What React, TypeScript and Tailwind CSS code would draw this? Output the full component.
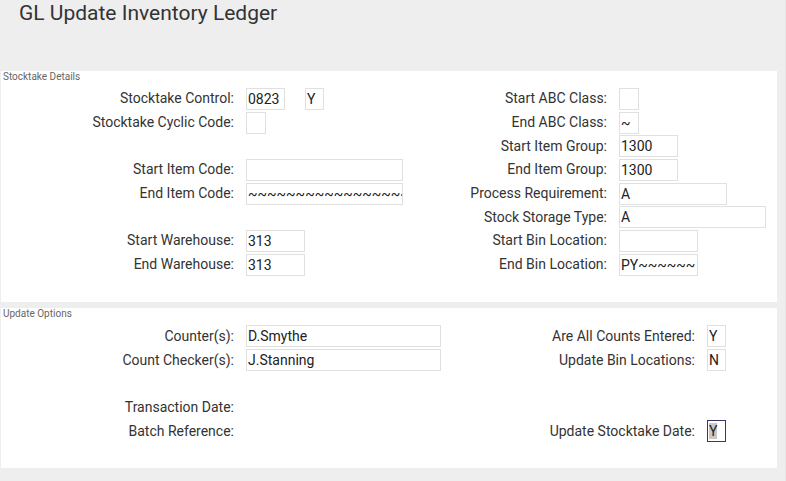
import React from "react";

type Field = { label?: string; value?: string; w?: number; focused?: boolean };

const font = { fontFamily: "Roboto, 'Liberation Sans', sans-serif" };

function Box({ value = "", w = 20, focused }: { value?: string; w?: number; focused?: boolean }) {
  return (
    <div
      className={
        "h-[22px] overflow-hidden whitespace-nowrap pl-[1px] text-[14px] leading-[20px] text-[#222] bg-white border " +
        (focused ? "border-[#3d3566]" : "border-[#e0e0e0]")
      }
      style={{ width: w }}
    >
      {focused ? <span className="bg-[#c8c8c8]">{value}</span> : value}
    </div>
  );
}

function Column({ rows, labelW }: { rows: (Field | Field[] | null)[]; labelW: string }) {
  return (
    <div className={"grid auto-rows-[23.7px] items-center gap-x-3 " + labelW}>
      {rows.map((r, i) => {
        if (!r) return <React.Fragment key={i}><div /><div /></React.Fragment>;
        const list = Array.isArray(r) ? r : [r];
        return (
          <React.Fragment key={i}>
            <div className="text-right text-[14px] text-[#333] whitespace-nowrap">{list[0].label}</div>
            <div className="flex gap-[20px]">
              {list.filter((f) => f.w !== undefined).map((f, j) => (
                <Box key={j} value={f.value} w={f.w} focused={f.focused} />
              ))}
            </div>
          </React.Fragment>
        );
      })}
    </div>
  );
}

const detailsLeft: (Field | Field[] | null)[] = [
  [{ label: "Stocktake Control:", value: "0823", w: 39 }, { value: "Y", w: 19 }],
  { label: "Stocktake Cyclic Code:", value: "", w: 20 },
  null,
  { label: "Start Item Code:", value: "", w: 157 },
  { label: "End Item Code:", value: "~~~~~~~~~~~~~~~~~~~~", w: 157 },
  null,
  { label: "Start Warehouse:", value: "313", w: 59 },
  { label: "End Warehouse:", value: "313", w: 59 },
];

const detailsRight: (Field | Field[] | null)[] = [
  { label: "Start ABC Class:", value: "", w: 20 },
  { label: "End ABC Class:", value: "~", w: 20 },
  { label: "Start Item Group:", value: "1300", w: 59 },
  { label: "End Item Group:", value: "1300", w: 59 },
  { label: "Process Requirement:", value: "A", w: 108 },
  { label: "Stock Storage Type:", value: "A", w: 147 },
  { label: "Start Bin Location:", value: "", w: 79 },
  { label: "End Bin Location:", value: "PY~~~~~~", w: 79 },
];

const optionsLeft: (Field | Field[] | null)[] = [
  { label: "Counter(s):", value: "D.Smythe", w: 195 },
  { label: "Count Checker(s):", value: "J.Stanning", w: 195 },
  null,
  { label: "Transaction Date:" },
  { label: "Batch Reference:" },
];

const optionsRight: (Field | Field[] | null)[] = [
  { label: "Are All Counts Entered:", value: "Y", w: 19 },
  { label: "Update Bin Locations:", value: "N", w: 19 },
  null,
  null,
  { label: "Update Stocktake Date:", value: "Y", w: 19, focused: true },
];

export default function App() {
  return (
    <div className="min-h-screen bg-[#eeeeee] border-r border-[#e4e4e4]" style={font}>
      <div className="h-[71px] pl-[19px]">
        <h1 className="text-[21px] leading-[26px] text-[#333]">GL Update Inventory Ledger</h1>
      </div>

      <section className="ml-px mr-[8px] bg-white pb-[25px]">
        <div className="h-[16px] pl-[2px] text-[10px] leading-[12px] text-[#666]">Stocktake Details</div>
        <div className="flex">
          <div className="w-[420px]">
            <Column rows={detailsLeft} labelW="grid-cols-[233px_1fr]" />
          </div>
          <div className="flex-1">
            <Column rows={detailsRight} labelW="grid-cols-[186px_1fr]" />
          </div>
        </div>
      </section>

      <section className="ml-px mr-[8px] mt-[6px] bg-white pb-[25px]">
        <div className="h-[17px] pl-[2px] text-[10px] leading-[12px] text-[#666]">Update Options</div>
        <div className="flex">
          <div className="w-[450px]">
            <Column rows={optionsLeft} labelW="grid-cols-[233px_1fr]" />
          </div>
          <div className="flex-1">
            <Column rows={optionsRight} labelW="grid-cols-[244px_1fr]" />
          </div>
        </div>
      </section>
    </div>
  );
}
